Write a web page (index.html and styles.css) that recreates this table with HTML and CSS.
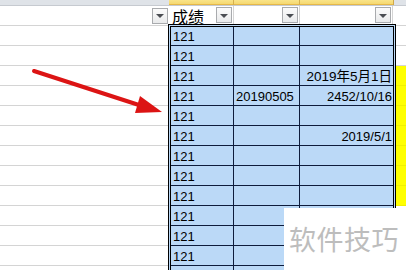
FILE: index.html
```html
<!DOCTYPE html>
<html lang="zh">
<head>
<meta charset="utf-8">
<title>Sheet</title>
<link rel="stylesheet" href="styles.css">
</head>
<body>
<div class="page">
  <div class="strip">
    <div class="sg sg-left"></div>
    <div class="sy sy-a"></div>
    <div class="sy sy-b"></div>
    <div class="sy sy-c"></div>
    <div class="sg sg-right"></div>
  </div>
  <div class="main">
    <div class="leftcol">
      <div class="lf"><span class="dd"></span></div>
      <div class="lr"></div><div class="lr"></div><div class="lr"></div><div class="lr"></div>
      <div class="lr"></div><div class="lr"></div><div class="lr"></div><div class="lr"></div>
      <div class="lr"></div><div class="lr"></div><div class="lr"></div><div class="lr"></div>
      <div class="lr"></div>
    </div>
    <div class="mid">
      <div class="filters">
        <div class="fc fc-a"><span class="ftext">成绩</span><span class="dd"></span></div>
        <div class="fc fc-b"><span class="dd"></span></div>
        <div class="fc fc-c"><span class="dd"></span></div>
      </div>
      <div class="block">
        <div class="c first">121</div><div class="c first"></div><div class="c first last"></div>
        <div class="c">121</div><div class="c"></div><div class="c last"></div>
        <div class="c">121</div><div class="c"></div><div class="c last r cjk">2019年5月1日</div>
        <div class="c">121</div><div class="c">20190505</div><div class="c last r">2452/10/16</div>
        <div class="c">121</div><div class="c"></div><div class="c last"></div>
        <div class="c">121</div><div class="c"></div><div class="c last r">2019/5/1</div>
        <div class="c">121</div><div class="c"></div><div class="c last"></div>
        <div class="c">121</div><div class="c"></div><div class="c last"></div>
        <div class="c">121</div><div class="c"></div><div class="c last"></div>
        <div class="c">121</div><div class="c"></div><div class="c last"></div>
        <div class="c">121</div><div class="c"></div><div class="c last"></div>
        <div class="c">121</div><div class="c"></div><div class="c last"></div>
        <div class="c"></div><div class="c"></div><div class="c last"></div>
      </div>
    </div>
    <div class="rightcol">
      <div class="rf"></div>
      <div class="rr"></div><div class="rr"></div>
      <div class="rr y"></div><div class="rr y"></div><div class="rr y"></div><div class="rr y"></div>
      <div class="rr y"></div><div class="rr y"></div><div class="rr y"></div>
      <div class="rr"></div><div class="rr"></div><div class="rr"></div><div class="rr"></div>
    </div>
  </div>
  <svg class="arrow" width="406" height="270" viewBox="0 0 406 270">
    <line x1="34" y1="71" x2="142" y2="106" stroke="#dc1414" stroke-width="4" stroke-linecap="round"/>
    <polygon points="162,112 140,96 135,113" fill="#dc1414"/>
  </svg>
  <div class="watermark">软件技巧</div>
</div>
</body>
</html>
```
FILE: styles.css
```css
html, body {
  margin: 0;
  padding: 0;
  background: #ffffff;
  overflow: hidden;
}
.page {
  position: relative;
  width: 406px;
  height: 270px;
  overflow: hidden;
  font-family: "Liberation Sans", "Noto Sans CJK SC", sans-serif;
  color: #000;
}
.strip {
  display: flex;
  height: 5px;
  border-bottom: 1px solid #c6cad0;
}
.sg {
  background: #dfe3e8;
}
.sg-left { width: 169px; }
.sg-right { flex: 1; }
.sy {
  background: linear-gradient(#f9e48a, #f4d56a);
  border-right: 1px solid #d6b04e;
  box-shadow: inset 0 -1px 0 #e5b84a;
}
.sy-a { width: 64px; }
.sy-b { width: 65px; }
.sy-c { width: 93px; border-right: 1px solid #cfa84a; }

.main {
  display: flex;
}
.leftcol {
  width: 168px;
  flex: none;
}
.lf {
  height: 19px;
  border-bottom: 1px solid #d4d4d4;
  display: flex;
  justify-content: flex-end;
  align-items: center;
}
.lr {
  height: 19px;
  border-bottom: 1px solid #d4d4d4;
}
.dd {
  box-sizing: border-box;
  width: 16px;
  height: 16px;
  border: 1px solid #a9abae;
  background: linear-gradient(#fbfbfb, #e9eaeb);
  display: flex;
  align-items: center;
  justify-content: center;
  flex: none;
}
.dd::after {
  content: "";
  width: 0;
  height: 0;
  border-left: 4px solid transparent;
  border-right: 4px solid transparent;
  border-top: 4px solid #4a4d52;
  margin-top: 1px;
}

.mid {
  width: 228px;
  flex: none;
}
.filters {
  display: flex;
  height: 18px;
  padding: 0 3px;
}
.fc {
  display: flex;
  align-items: center;
  justify-content: flex-end;
  border-right: 1px solid #d4d4d4;
}
.fc-a { width: 62px; justify-content: space-between; }
.fc-b { width: 65px; }
.fc-c { width: 92px; }
.fc .dd { margin-right: 1px; }
.ftext {
  font-family: "Noto Sans CJK SC", sans-serif;
  font-size: 16px;
  line-height: 18px;
  padding-left: 1px;
  margin-top: 1px;
}
.block {
  border: 3px double #000;
  display: grid;
  grid-template-columns: 63px 66px 93px;
  background: #bbd9f7;
}
.c {
  height: 19px;
  border-bottom: 1px solid #0e1c3c;
  border-right: 1px solid #0e1c3c;
  font-size: 13px;
  line-height: 21px;
  padding: 0 2px;
  white-space: nowrap;
  overflow: hidden;
}
.c.first { height: 18px; line-height: 20px; }
.c.last { border-right: 0; }
.c.r { text-align: right; padding-right: 1px; }
.c.cjk { font-size: 13.5px; }

.rightcol {
  flex: 1;
}
.rf {
  height: 19px;
  border-bottom: 1px solid #d4d4d4;
}
.rr {
  height: 19px;
  border-bottom: 1px solid #d4d4d4;
}
.rr.y {
  background: #ffff00;
  border-bottom-color: #f0f000;
}

.arrow {
  position: absolute;
  left: 0;
  top: 0;
  pointer-events: none;
}
.watermark {
  position: absolute;
  left: 284px;
  top: 208px;
  right: 0;
  bottom: 0;
  background: #ffffff;
  color: #bdbdbd;
  font-family: "Noto Sans CJK SC", sans-serif;
  font-size: 27px;
  line-height: 62px;
  padding-left: 5px;
  letter-spacing: 0.5px;
}
```
